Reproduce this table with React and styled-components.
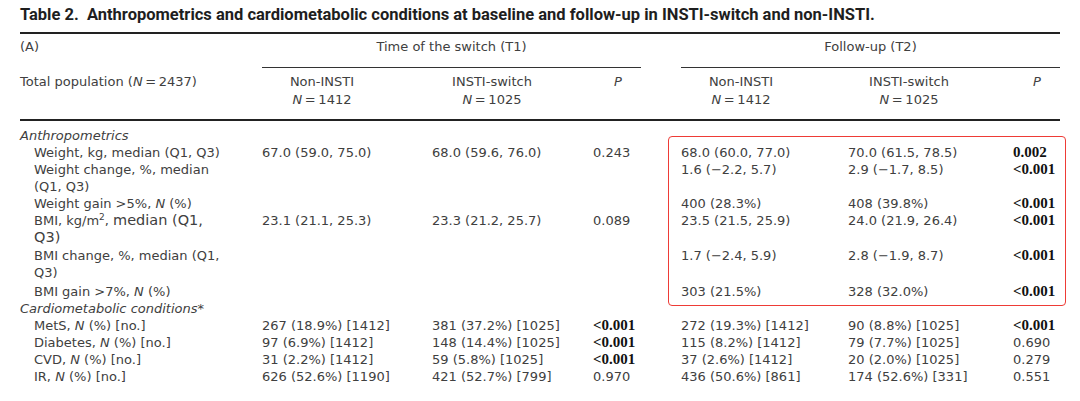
import React from "react";
import styled, { createGlobalStyle } from "styled-components";

const COLS = "242px 170px 161px 48px 40px 167px 165px 47px";

const GlobalStyle = createGlobalStyle`
  html, body { margin: 0; padding: 0; background: #ffffff; }
  body { width: 1080px; height: 401px; overflow: hidden; }
`;

const Page = styled.div`
  padding: 0 20px;
  font-family: "DejaVu Sans", "Open Sans", sans-serif;
  font-size: 13px;
  color: #404040;
`;

const Title = styled.h1`
  margin: 0;
  height: 32px;
  line-height: 30px;
  font-family: Roboto, "Liberation Sans", sans-serif;
  font-weight: 700;
  font-size: 16.5px;
  color: #1e1e1e;
  white-space: nowrap;
`;

const Table = styled.div`
  width: 1040px;
  border-top: 2px solid #222;
`;

const GroupRow = styled.div`
  display: grid;
  grid-template-columns: ${COLS};
  line-height: 17px;
`;

const Cell = styled.div`
  padding: 4px 0 12px;
  white-space: nowrap;
`;

const SpanHead = styled.div`
  grid-column: ${(p) => p.$from} / ${(p) => p.$to};
  padding: 4px 0 12px;
  text-align: center;
  border-bottom: 1px solid #333;
`;

const HeadRow = styled.div`
  display: grid;
  grid-template-columns: ${COLS};
  line-height: 18px;
  padding: 5px 0 10px;
  border-bottom: 2px solid #222;
`;

const HeadCell = styled.div`
  width: ${(p) => p.$w}px;
  text-align: center;
  white-space: nowrap;
`;

const Body = styled.div`
  position: relative;
  padding-top: 6px;
`;

const Row = styled.div`
  display: grid;
  grid-template-columns: ${COLS};
  line-height: 17px;
  padding-top: ${(p) => p.$pt || 0}px;
`;

const Label = styled.div`
  padding-left: ${(p) => (p.$group ? 0 : 14)}px;
  font-style: ${(p) => (p.$group ? "italic" : "normal")};
  white-space: nowrap;
`;

const Big = styled.span`
  font-size: 14.5px;
`;

const Sup = styled.sup`
  font-size: 9px;
  line-height: 0;
`;

const Value = styled.div`
  white-space: nowrap;
`;

const PValue = styled.div`
  white-space: nowrap;
  ${(p) =>
    p.$sig
      ? `font-family: "Liberation Serif", "Times New Roman", serif;
         font-weight: 700;
         font-size: 15px;
         color: #111;`
      : ""}
`;

const Gap = styled.div``;

const Highlight = styled.div`
  position: absolute;
  left: 648px;
  top: 15px;
  width: 398px;
  height: 170px;
  box-sizing: border-box;
  border: 1.5px solid #ee3b36;
  border-radius: 4px;
  pointer-events: none;
`;

const I = styled.i`
  font-style: italic;
`;

const rows = [
  { group: true, label: "Anthropometrics" },
  {
    label: "Weight, kg, median (Q1, Q3)",
    v: ["67.0 (59.0, 75.0)", "68.0 (59.6, 76.0)", "0.243", "68.0 (60.0, 77.0)", "70.0 (61.5, 78.5)", "0.002"],
    sig: [false, true],
  },
  {
    label: (
      <>
        Weight change, %, median
        <br />
        (Q1, Q3)
      </>
    ),
    v: ["", "", "", "1.6 (\u22122.2, 5.7)", "2.9 (\u22121.7, 8.5)", "<0.001"],
    sig: [false, true],
  },
  {
    label: (
      <>
        Weight gain &gt;5%, <I>N</I> (%)
      </>
    ),
    v: ["", "", "", "400 (28.3%)", "408 (39.8%)", "<0.001"],
    sig: [false, true],
  },
  {
    label: (
      <>
        BMI, kg/m<Sup>2</Sup>, <Big>median (Q1,</Big>
        <br />
        <Big>Q3)</Big>
      </>
    ),
    v: ["23.1 (21.1, 25.3)", "23.3 (21.2, 25.7)", "0.089", "23.5 (21.5, 25.9)", "24.0 (21.9, 26.4)", "<0.001"],
    sig: [false, true],
  },
  {
    label: (
      <>
        BMI change, %, median (Q1,
        <br />
        Q3)
      </>
    ),
    v: ["", "", "", "1.7 (\u22122.4, 5.9)", "2.8 (\u22121.9, 8.7)", "<0.001"],
    sig: [false, true],
    pt: 1,
  },
  {
    label: (
      <>
        BMI gain &gt;7%, <I>N</I> (%)
      </>
    ),
    v: ["", "", "", "303 (21.5%)", "328 (32.0%)", "<0.001"],
    sig: [false, true],
    pt: 2,
  },
  { group: true, label: "Cardiometabolic conditions*" },
  {
    label: (
      <>
        MetS, <I>N</I> (%) [no.]
      </>
    ),
    v: ["267 (18.9%) [1412]", "381 (37.2%) [1025]", "<0.001", "272 (19.3%) [1412]", "90 (8.8%) [1025]", "<0.001"],
    sig: [true, true],
  },
  {
    label: (
      <>
        Diabetes, <I>N</I> (%) [no.]
      </>
    ),
    v: ["97 (6.9%) [1412]", "148 (14.4%) [1025]", "<0.001", "115 (8.2%) [1412]", "79 (7.7%) [1025]", "0.690"],
    sig: [true, false],
  },
  {
    label: (
      <>
        CVD, <I>N</I> (%) [no.]
      </>
    ),
    v: ["31 (2.2%) [1412]", "59 (5.8%) [1025]", "<0.001", "37 (2.6%) [1412]", "20 (2.0%) [1025]", "0.279"],
    sig: [true, false],
  },
  {
    label: (
      <>
        IR, <I>N</I> (%) [no.]
      </>
    ),
    v: ["626 (52.6%) [1190]", "421 (52.7%) [799]", "0.970", "436 (50.6%) [861]", "174 (52.6%) [331]", "0.551"],
    sig: [false, false],
  },
];

const NEq = ({ n }) => (
  <>
    <I>N</I>
    {"\u2009=\u2009"}
    {n}
  </>
);

export default function App() {
  return (
    <>
      <GlobalStyle />
      <Page>
        <Title>
          Table 2.&nbsp; Anthropometrics and cardiometabolic conditions at baseline and follow-up in INSTI-switch and
          non-INSTI.
        </Title>
        <Table>
          <GroupRow>
            <Cell>(A)</Cell>
            <SpanHead $from={2} $to={5}>
              Time of the switch (T1)
            </SpanHead>
            <Gap />
            <SpanHead $from={6} $to={9}>
              Follow-up (T2)
            </SpanHead>
          </GroupRow>
          <HeadRow>
            <div>
              Total population (<NEq n="2437" />)
            </div>
            <HeadCell $w={120}>
              Non-INSTI
              <br />
              <NEq n="1412" />
            </HeadCell>
            <HeadCell $w={120}>
              INSTI-switch
              <br />
              <NEq n="1025" />
            </HeadCell>
            <HeadCell $w={50}>
              <I>P</I>
            </HeadCell>
            <Gap />
            <HeadCell $w={120}>
              Non-INSTI
              <br />
              <NEq n="1412" />
            </HeadCell>
            <HeadCell $w={122}>
              INSTI-switch
              <br />
              <NEq n="1025" />
            </HeadCell>
            <HeadCell $w={48}>
              <I>P</I>
            </HeadCell>
          </HeadRow>
          <Body>
            {rows.map((r, i) =>
              r.group ? (
                <Row key={i}>
                  <Label $group>{r.label}</Label>
                </Row>
              ) : (
                <Row key={i} $pt={r.pt}>
                  <Label>{r.label}</Label>
                  <Value>{r.v[0]}</Value>
                  <Value>{r.v[1]}</Value>
                  <PValue $sig={r.sig[0]}>{r.v[2]}</PValue>
                  <Gap />
                  <Value>{r.v[3]}</Value>
                  <Value>{r.v[4]}</Value>
                  <PValue $sig={r.sig[1]}>{r.v[5]}</PValue>
                </Row>
              )
            )}
            <Highlight />
          </Body>
        </Table>
      </Page>
    </>
  );
}
